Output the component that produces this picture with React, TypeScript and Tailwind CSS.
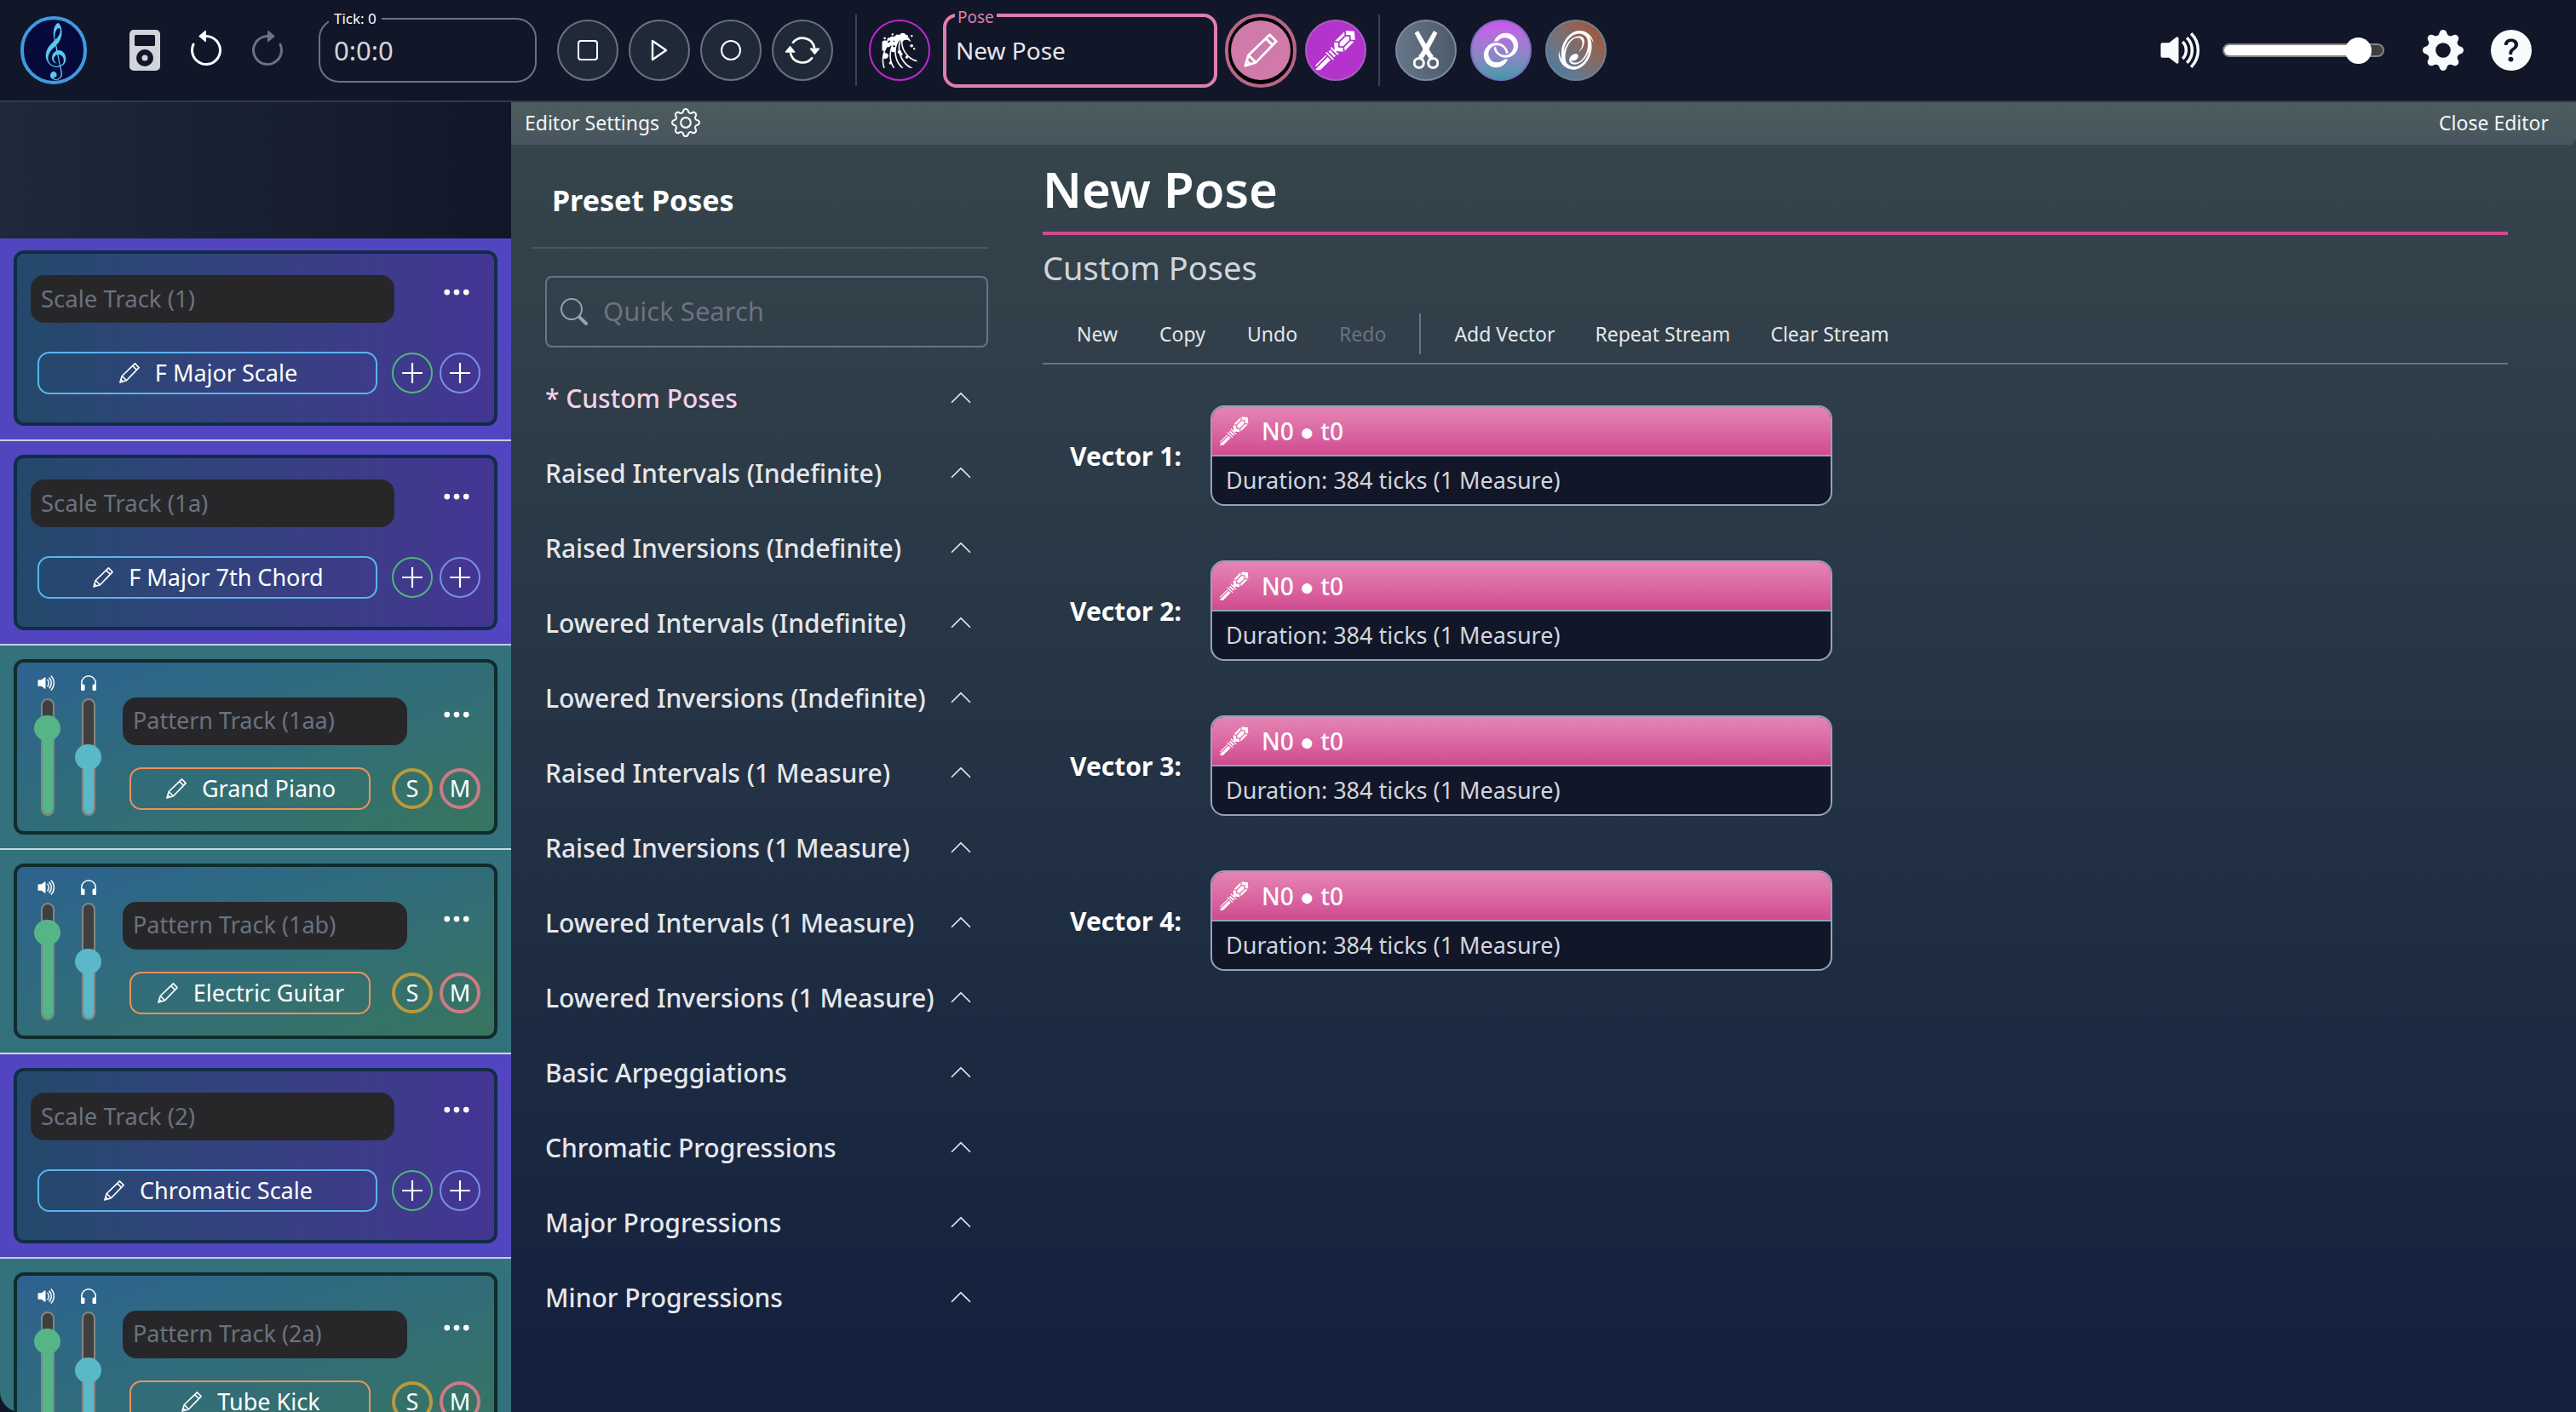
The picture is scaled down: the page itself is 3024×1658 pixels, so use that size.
import React from "react";
import {
  BsArrowClockwise, BsArrowCounterclockwise, BsArrowRepeat, BsChevronUp, BsGear, BsGearFill,
  BsHeadphones, BsQuestionCircleFill, BsSearch, BsThreeDots, BsVolumeUpFill,
} from "react-icons/bs";
import { GiCrystalWand, GiLinkedRings, GiPortal, GiWaveCrest } from "react-icons/gi";

const FONT = "font-['Noto_Sans',sans-serif]";

function Pencil({ size = 28, strokeWidth = 1.4 }: { size?: number; strokeWidth?: number }) {
  return (
    <svg width={size} height={size} viewBox="0 0 24 24" fill="none" stroke="currentColor" strokeWidth={strokeWidth} strokeLinejoin="round">
      <path d="M2.5 21.5 L4.5 15 L17.5 2.5 L21.5 6.5 L9 19.5 Z" />
      <path d="M4.5 15 L9 19.5 M15.2 4.8 L19.2 8.8 M3.4 18.4 L5.6 20.6" />
    </svg>
  );
}

function Scissors() {
  return (
    <svg width="30" height="46" viewBox="0 0 30 46" fill="none" stroke="white">
      <path d="M2.5 3 L5.5 1 L20 26 L23 30 L19 32 L12 21 Z" fill="white" strokeWidth="1.5" strokeLinejoin="round" />
      <path d="M27.5 3 L24.5 1 L10 26 L7 30 L11 32 L18 21 Z" fill="white" strokeWidth="1.5" strokeLinejoin="round" />
      <circle cx="6.8" cy="38" r="5.6" strokeWidth="3" />
      <circle cx="23.2" cy="38" r="5.6" strokeWidth="3" />
    </svg>
  );
}

function Plus() {
  return (
    <svg width="26" height="26" viewBox="0 0 24 24" fill="none" stroke="#ffffff" strokeWidth="2">
      <path d="M12 1 V23 M1 12 H23" />
    </svg>
  );
}

function NameBox({ name, wide }: { name: string; wide: boolean }) {
  return (
    <div className={`flex h-14 items-center rounded-2xl bg-[#27272a] px-3 pb-[1px] text-[#6b7280] ${wide ? "w-[427px] text-[27.5px]" : "w-[334px] text-[27px]"}`}>
      {name}
    </div>
  );
}

function Fader({ top, color }: { top: number; color: string }) {
  return (
    <div className="relative h-[138px] w-4 overflow-visible">
      <div className="h-full w-full overflow-hidden rounded-full border-2 border-[#858585] bg-[#3f3f3f]">
        <div className="w-full" style={{ height: 138 - top, marginTop: top, backgroundColor: color }} />
      </div>
      <div className="absolute left-[-8px] h-[30px] w-[31px] rounded-full" style={{ top: top - 15, backgroundColor: color }} />
    </div>
  );
}

function ScaleTrack({ name, preset, first }: { name: string; preset: string; first?: boolean }) {
  return (
    <div className={`shrink-0 border-b-2 border-[#c7cce8] bg-[#5146c0] px-4 ${first ? "h-[238px] pt-[14px]" : "h-[240px] pt-4"}`}>
      <div className="flex h-[206px] w-[568px] flex-col rounded-xl border-4 border-[#122c47] bg-gradient-to-r from-[#23496b] to-[#443594] pl-4 pr-4 pt-[25px]">
        <div className="flex items-start justify-between">
          <NameBox name={name} wide />
          <BsThreeDots className="mr-[10px] mt-[2px] text-[#ffffff]" size={36} />
        </div>
        <div className="mt-[34px] flex items-center">
          <div className="ml-2 flex h-[50px] w-[399px] items-center justify-center gap-4 rounded-[14px] border-2 border-[#5ab4f0] text-[27px] text-white">
            <Pencil />
            <span>{preset}</span>
          </div>
          <div className="ml-[17px] flex h-12 w-12 items-center justify-center rounded-full border-2 border-[#4fb878]"><Plus /></div>
          <div className="ml-2 flex h-12 w-12 items-center justify-center rounded-full border-2 border-[#7b90e0]"><Plus /></div>
        </div>
      </div>
    </div>
  );
}

function PatternTrack({ name, preset }: { name: string; preset: string }) {
  return (
    <div className="h-[240px] shrink-0 border-b-2 border-[#c9dbe0] bg-[#33717d] px-4 pt-4">
      <div className="flex h-[206px] w-[568px] rounded-xl border-4 border-[#102c2c] bg-gradient-to-br from-[#2d6290] to-[#38755f] pl-4 pr-4 pt-[10px]">
        <div className="flex w-[108px] shrink-0 flex-col">
          <div className="flex h-[31px] items-center gap-[25px] pb-[3px] pl-[7px] text-white">
            <BsVolumeUpFill size={24} />
            <BsHeadphones size={24} />
          </div>
          <div className="mt-[1px] flex gap-8 pl-3">
            <Fader top={35} color="#55b587" />
            <Fader top={69} color="#5ab8c8" />
          </div>
        </div>
        <div className="flex min-w-0 flex-1 flex-col pt-[31px]">
          <div className="flex items-start justify-between">
            <NameBox name={name} wide={false} />
            <BsThreeDots className="mr-[10px] mt-[2px] text-white" size={36} />
          </div>
          <div className="mt-[26px] flex items-center">
            <div className="ml-2 flex h-[50px] w-[283px] items-center justify-center gap-4 rounded-[14px] border-2 border-[#f0905a] text-[27px] text-white">
              <Pencil />
              <span>{preset}</span>
            </div>
            <div className="ml-[25px] flex h-12 w-12 items-center justify-center rounded-full border-4 border-[#b99a3c] text-[27px] text-white">S</div>
            <div className="ml-2 flex h-12 w-12 items-center justify-center rounded-full border-4 border-[#cf7a85] text-[27px] text-white">M</div>
          </div>
        </div>
      </div>
    </div>
  );
}

function RoundBtn({ children }: { children: React.ReactNode }) {
  return (
    <div className="flex h-[72px] w-[72px] items-center justify-center rounded-full border-2 border-[#6b7280] bg-[#1f2937] text-white">
      {children}
    </div>
  );
}

function TopBar() {
  return (
    <div className="flex h-[120px] items-center border-b-2 border-[#2e3a4e] bg-[#111729] pl-6 pr-[52px]">
      <div className="flex h-[80px] w-[78px] shrink-0 items-center justify-center overflow-hidden rounded-full border-4 border-[#3f9ae0] bg-[#050a3a] font-['DejaVu_Sans',sans-serif] text-[56px] leading-none text-[#5ac8f0]">
        𝄞
      </div>
      <svg className="ml-[50px] shrink-0" width="36" height="48" viewBox="0 0 36 48">
        <rect width="36" height="48" rx="5" fill="#d1d5db" />
        <rect x="6" y="6" width="24" height="13" rx="1.5" fill="#111729" />
        <circle cx="18" cy="33" r="10" fill="#111729" />
        <circle cx="18" cy="33" r="3.5" fill="#d1d5db" />
      </svg>
      <BsArrowCounterclockwise className="ml-[30px] shrink-0 text-white" size={48} />
      <BsArrowClockwise className="ml-[24px] shrink-0 text-[#6b7280]" size={48} />
      <div className="relative ml-[36px] flex h-[76px] w-[256px] shrink-0 items-center rounded-3xl border-2 border-[#6b7280] pl-4 text-[31px] text-[#d1d5db]">
        <span className="absolute left-[10px] top-[-13px] bg-[#111729] px-[6px] text-[17px] leading-6 text-white">Tick: 0</span>
        0:0:0
      </div>
      <div className="ml-6 flex shrink-0 gap-3">
        <RoundBtn><div className="h-6 w-6 rounded-[4px] border-2 border-white" /></RoundBtn>
        <RoundBtn><svg width="22" height="28" viewBox="0 0 22 28" fill="none" stroke="white" strokeWidth="2.4"><path d="M3 3 L19 14 L3 25 Z" strokeLinejoin="round" /></svg></RoundBtn>
        <RoundBtn><div className="h-6 w-6 rounded-full border-2 border-white" /></RoundBtn>
        <RoundBtn><BsArrowRepeat size={42} /></RoundBtn>
      </div>
      <div className="ml-[26px] h-[84px] w-[2px] shrink-0 bg-[#3a4354]" />
      <div className="ml-[14px] flex h-[72px] w-[72px] shrink-0 items-center justify-center rounded-full border-2 border-[#c026d3] text-white"><GiWaveCrest size={44} /></div>
      <div className="relative ml-[15px] flex h-[87px] w-[322px] shrink-0 items-center rounded-2xl border-4 border-[#df7fae] pl-[11px] text-[28px] text-[#e5e7eb]">
        <span className="absolute left-[10px] top-[-12px] bg-[#111729] px-[3px] text-[19px] leading-6 text-[#df7fae]">Pose</span>
        New Pose
      </div>
      <div className="ml-[9px] flex h-[87px] w-[84px] shrink-0 items-center justify-center rounded-full border-4 border-[#b9648c] bg-black">
        <div className="flex h-[70px] w-[70px] items-center justify-center rounded-full bg-[#cf7aa8] text-white"><Pencil size={46} strokeWidth={1.5} /></div>
      </div>
      <div className="ml-[10px] flex h-[72px] w-[72px] shrink-0 items-center justify-center rounded-full border-2 border-[#a860c0] bg-[#b333cc] text-white"><GiCrystalWand size={50} /></div>
      <div className="ml-[14px] h-[84px] w-[2px] shrink-0 bg-[#3a4354]" />
      <div className="ml-[18px] flex h-[72px] w-[72px] shrink-0 items-center justify-center rounded-full border-2 border-[#7b8a9c] bg-gradient-to-r from-[#66768a] to-[#4d5a6a]"><Scissors /></div>
      <div className="ml-4 flex h-[72px] w-[72px] shrink-0 items-center justify-center rounded-full border-2 border-[#7c6cc0] bg-gradient-to-b from-[#cc55ee] to-[#3d9aa8] text-white"><GiLinkedRings size={44} /></div>
      <div className="ml-4 flex h-[72px] w-[72px] shrink-0 items-center justify-center rounded-full border-2 border-[#6f8090] bg-gradient-to-bl from-[#a84f20] to-[#2f80b0] text-white"><GiPortal size={50} /></div>
      <div className="ml-auto flex items-center">
        <BsVolumeUpFill className="text-[#f8fafc]" size={56} />
        <div className="relative ml-[20px] h-4 w-[190px] rounded-full border-2 border-[#858585] bg-[#3f3f3f]">
          <div className="h-full w-[160px] rounded-full bg-white" />
          <div className="absolute left-[142px] top-[-9px] h-[31px] w-[31px] rounded-full bg-white" />
        </div>
        <BsGearFill className="ml-[45px] text-[#f8fafc]" size={48} />
        <BsQuestionCircleFill className="ml-8 text-[#f8fafc]" size={48} />
      </div>
    </div>
  );
}

const PRESETS = [
  "Raised Intervals (Indefinite)", "Raised Inversions (Indefinite)", "Lowered Intervals (Indefinite)",
  "Lowered Inversions (Indefinite)", "Raised Intervals (1 Measure)", "Raised Inversions (1 Measure)",
  "Lowered Intervals (1 Measure)", "Lowered Inversions (1 Measure)", "Basic Arpeggiations",
  "Chromatic Progressions", "Major Progressions", "Minor Progressions",
];

function PresetItem({ label, pink }: { label: string; pink?: boolean }) {
  return (
    <div className={`flex h-[88px] items-center justify-between pr-[18px] pb-[2px] text-[30px] font-medium ${pink ? "text-[#f5d0e6]" : "text-[#e5e7eb]"}`}>
      <span className="whitespace-nowrap">{label}</span>
      <BsChevronUp className="shrink-0 text-[#e5e7eb]" size={28} />
    </div>
  );
}

function PresetColumn() {
  return (
    <div className="w-[624px] shrink-0 pl-6">
      <div className="flex h-[122px] w-[536px] items-center border-b-2 border-[#475569] pl-6 pt-[10px] text-[34px] font-bold text-white">
        Preset Poses
      </div>
      <div className="ml-4 mt-8 flex h-[84px] w-[520px] items-center gap-[18px] rounded-lg border-2 border-[#64748b] pl-4 pb-[1px] text-[31px] text-[#6b7280]">
        <BsSearch className="text-[#94a3b8]" size={32} />
        <span>Quick Search</span>
      </div>
      <div className="ml-4 mt-4 w-[520px]">
        <PresetItem label="* Custom Poses" pink />
        {PRESETS.map((p) => <PresetItem key={p} label={p} />)}
      </div>
    </div>
  );
}

function VectorRow({ n }: { n: number }) {
  return (
    <div className="flex items-center">
      <div className="ml-8 w-[165px] text-[30px] font-bold text-white">Vector {n}:</div>
      <div className="h-[118px] w-[730px] overflow-hidden rounded-2xl border-2 border-[#94a3b8] bg-[#111729]">
        <div className="flex h-[58px] items-center gap-[14px] border-b-2 border-[#94a3b8] bg-gradient-to-b from-[#e585b5] to-[#d04a90] pl-2 text-[28px] font-medium text-white">
          <GiCrystalWand size={36} />
          <span>N0 ● t0</span>
        </div>
        <div className="flex h-[56px] items-center pl-[16px] text-[27px] text-[#d1d5db]">Duration: 384 ticks (1 Measure)</div>
      </div>
    </div>
  );
}

const TOOLS = ["New", "Copy", "Undo", "Redo"];
const TOOLS2 = ["Add Vector", "Repeat Stream", "Clear Stream"];

function MainColumn() {
  return (
    <div className="w-[1720px]">
      <div className="flex h-[106px] items-center border-b-4 border-[#d04a90] text-[58px] font-semibold text-white">New Pose</div>
      <div className="flex h-[78px] items-center pb-[1px] text-[38px] text-[#d1d5db]">Custom Poses</div>
      <div className="flex h-[74px] items-center border-b-2 border-[#64748b] pl-10 pt-1 text-[23px] text-[#e5e7eb]">
        <div className="flex gap-[49px]">
          {TOOLS.map((t) => <span key={t} className={t === "Redo" ? "text-[#6b7280]" : ""}>{t}</span>)}
        </div>
        <div className="ml-[39px] mr-[39px] h-12 w-[2px] bg-[#64748b]" />
        <div className="flex gap-[47px]">
          {TOOLS2.map((t) => <span key={t}>{t}</span>)}
        </div>
      </div>
      <div className="mt-[48px] flex flex-col gap-16">
        {[1, 2, 3, 4].map((n) => <VectorRow key={n} n={n} />)}
      </div>
    </div>
  );
}

export default function App() {
  return (
    <div className={`flex h-[1658px] w-[3024px] flex-col overflow-hidden bg-[#111729] ${FONT}`}>
      <TopBar />
      <div className="flex min-h-0 flex-1">
        <div className="flex w-[600px] shrink-0 flex-col overflow-hidden rounded-bl-3xl">
          <div className="h-[160px] shrink-0 bg-gradient-to-r from-[#1e293b] to-[#111729]" />
          <ScaleTrack first name="Scale Track (1)" preset="F Major Scale" />
          <ScaleTrack name="Scale Track (1a)" preset="F Major 7th Chord" />
          <PatternTrack name="Pattern Track (1aa)" preset="Grand Piano" />
          <PatternTrack name="Pattern Track (1ab)" preset="Electric Guitar" />
          <ScaleTrack name="Scale Track (2)" preset="Chromatic Scale" />
          <PatternTrack name="Pattern Track (2a)" preset="Tube Kick" />
        </div>
        <div className="flex flex-1 flex-col bg-gradient-to-b from-[#37464b] to-[#131f3d]">
          <div className="flex h-[50px] shrink-0 items-center justify-between rounded-br-lg bg-gradient-to-b from-[#4d5c5c] to-[#475560] pb-[2px] pl-[16px] pr-8 text-[23px] text-[#f1f5f9]">
            <div className="flex items-center gap-[14px]">
              <span>Editor Settings</span>
              <BsGear size={34} />
            </div>
            <span>Close Editor</span>
          </div>
          <div className="flex">
            <PresetColumn />
            <MainColumn />
          </div>
        </div>
      </div>
    </div>
  );
}
